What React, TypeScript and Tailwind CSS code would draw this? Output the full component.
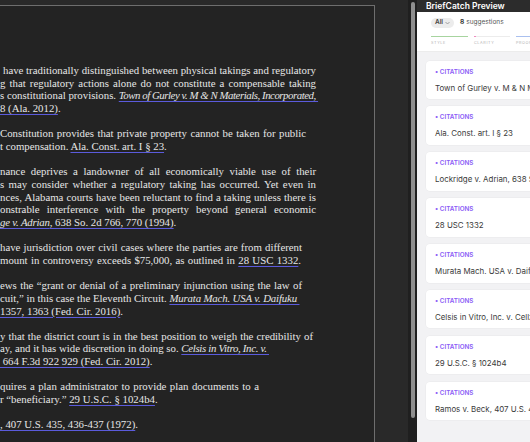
type Seg = { t: string; i?: boolean; u?: boolean; tr?: string };
type Line = { cls: string; segs: Seg[] };

const J = "text-justify [text-align-last:justify]";

const paragraphs: Line[][] = [
  [
    { cls: `ml-[3px] w-[313px] ${J}`, segs: [{ t: "have traditionally distinguished between physical takings and regulatory" }] },
    { cls: `w-[316px] ${J}`, segs: [{ t: "g that regulatory actions alone do not constitute a compensable taking" }] },
    {
      cls: "",
      segs: [
        { t: "s constitutional provisions. " },
        { t: "Town of Gurley v. M & N Materials, Incorporated,\u00a0", i: true, u: true, tr: "tracking-[-0.45px]" },
      ],
    },
    { cls: "", segs: [{ t: "8 (Ala. 2012)", u: true }, { t: "." }] },
  ],
  [
    { cls: `w-[306px] ${J}`, segs: [{ t: "Constitution provides that private property cannot be taken for public" }] },
    { cls: "", segs: [{ t: "t compensation. " }, { t: "Ala. Const. art. I § 23", u: true }, { t: "." }] },
  ],
  [
    { cls: `w-[316px] ${J}`, segs: [{ t: "nance deprives a landowner of all economically viable use of their" }] },
    { cls: `w-[316px] ${J}`, segs: [{ t: "s may consider whether a regulatory taking has occurred. Yet even in" }] },
    { cls: `w-[316px] ${J}`, segs: [{ t: "nces, Alabama courts have been reluctant to find a taking unless there is" }] },
    { cls: `w-[316px] ${J}`, segs: [{ t: "onstrable interference with the property beyond general economic" }] },
    {
      cls: "",
      segs: [
        { t: "ge v. Adrian", i: true, u: true, tr: "tracking-[-0.2px]" },
        { t: ", 638 So. 2d 766, 770 (1994)", u: true },
        { t: "." },
      ],
    },
  ],
  [
    { cls: `w-[302px] ${J}`, segs: [{ t: "have jurisdiction over civil cases where the parties are from different" }] },
    {
      cls: `w-[301px] ${J}`,
      segs: [{ t: "mount in controversy exceeds $75,000, as outlined in " }, { t: "28 USC 1332", u: true }, { t: "." }],
    },
  ],
  [
    { cls: `w-[302px] ${J}`, segs: [{ t: "ews the \u201cgrant or denial of a preliminary injunction using the law of" }] },
    {
      cls: "",
      segs: [
        { t: "cuit,\u201d in this case the Eleventh Circuit. " },
        { t: "Murata Mach. USA v. Daifuku\u00a0", i: true, u: true, tr: "tracking-[-0.15px]" },
      ],
    },
    { cls: "", segs: [{ t: "1357, 1363 (Fed. Cir. 2016)", u: true }, { t: "." }] },
  ],
  [
    { cls: `w-[313px] ${J}`, segs: [{ t: "y that the district court is in the best position to weigh the credibility of" }] },
    {
      cls: "",
      segs: [
        { t: "ay, and it has wide discretion in doing so. " },
        { t: "Celsis in Vitro, Inc. v.\u00a0", i: true, u: true, tr: "tracking-[-0.3px]" },
      ],
    },
    { cls: "", segs: [{ t: "\u00a0664 F.3d 922 929 (Fed. Cir. 2012)", u: true }, { t: "." }] },
  ],
  [
    { cls: `w-[259px] ${J}`, segs: [{ t: "quires a plan administrator to provide plan documents to a" }] },
    {
      cls: "",
      segs: [{ t: "r \u201cbeneficiary.\u201d " }, { t: "29 U.S.C. § 1024b4", u: true }, { t: "." }],
    },
  ],
  [{ cls: "", segs: [{ t: ", 407 U.S. 435, 436-437 (1972)", u: true }, { t: "." }] }],
];

const cards = [
  "Town of Gurley v. M & N Materials, Incorporated",
  "Ala. Const. art. I § 23",
  "Lockridge v. Adrian, 638 So. 2d 766, 770 (1994)",
  "28 USC 1332",
  "Murata Mach. USA v. Daifuku Co., 830 F.3d 1357",
  "Celsis in Vitro, Inc. v. CellzDirect, Inc., 664 F.3d 922",
  "29 U.S.C. § 1024b4",
  "Ramos v. Beck, 407 U.S. 435, 436-437 (1972)",
];

function DocLine({ line }: { line: Line }) {
  return (
    <div className={`whitespace-pre-wrap ${line.cls}`}>
      {line.segs.map((s, k) => (
        <span
          key={k}
          className={`${s.i ? "italic" : ""} ${s.tr ?? ""} ${
            s.u ? "underline decoration-[#5b5bdc] decoration-1 underline-offset-[2px]" : ""
          }`}
        >
          {s.t}
        </span>
      ))}
    </div>
  );
}

export default function App() {
  return (
    <div className="flex h-[442px] w-[530px] overflow-hidden bg-[#292929]">
      {/* document */}
      <div className="h-full w-[408px] flex-none pt-[5px]">
        <div className="h-full w-[375px] overflow-hidden border-t border-r border-[#6e6e6e] bg-[#232323] pt-[58px] font-['Liberation_Serif',serif] text-[10.8px] leading-[12.7px] text-[#e6e6e6]">
          {paragraphs.map((p, i) => (
            <div key={i} className="mb-[12.5px]">
              {p.map((l, j) => (
                <DocLine key={j} line={l} />
              ))}
            </div>
          ))}
        </div>
      </div>

      {/* scrollbar */}
      <div className="h-full w-[9px] flex-none bg-[#1f1f1f] pt-[2px]">
        <div className="ml-[3px] h-[416px] w-[4px] rounded-full bg-[#8e8e8e]" />
      </div>

      {/* side panel */}
      <div className="flex h-full w-[113px] flex-none flex-col overflow-hidden font-['Inter',sans-serif]">
        <div className="flex h-[12px] w-[200px] items-center bg-[#2c2c2c] pl-[9px] text-[8.5px] font-semibold text-white">
          BriefCatch Preview
        </div>
        <div className="h-[40px] w-[200px] border-b border-[#ececec] bg-white pl-[14px] pt-[6px]">
          <div className="flex items-center">
            <div className="flex h-[10px] w-[23px] items-center justify-center gap-[2px] rounded-full bg-[#ececec] text-[6.5px] font-semibold text-[#444]">
              All
              <svg width="5" height="4" viewBox="0 0 10 6" fill="none" stroke="#888" strokeWidth="1.5">
                <path d="M1 1l4 4 4-4" />
              </svg>
            </div>
            <span className="ml-[6px] text-[6.5px] font-bold text-[#333]">8</span>
            <span className="ml-[2px] text-[6.5px] text-[#555]">suggestions</span>
          </div>
          <div className="mt-[8px] flex gap-[6px]">
            <div className="w-[37px]">
              <div className="h-[1px] bg-[#a7d49f]" />
              <div className="mt-[3px] text-[3.8px] tracking-[0.6px] text-[#b5b5b5]">STYLE</div>
            </div>
            <div className="w-[36px]">
              <div className="flex h-[1px] bg-[#ececec]">
                <div className="w-[2px] bg-[#f08cc0]" />
              </div>
              <div className="mt-[3px] text-[3.8px] tracking-[0.6px] text-[#b5b5b5]">CLARITY</div>
            </div>
            <div className="w-[36px]">
              <div className="h-[1px] bg-[#aac0ef]" />
              <div className="mt-[3px] text-[3.8px] tracking-[0.6px] text-[#b5b5b5]">PROOFING</div>
            </div>
          </div>
        </div>
        <div className="flex flex-1 flex-col gap-[7.4px] bg-[#f2f2f4] pl-[9px] pt-[8.5px]">
          {cards.map((c, i) => (
            <div
              key={i}
              className="h-[38.5px] w-[200px] flex-none rounded-[4px] bg-white pl-[9px] pt-[8px] shadow-[0_0_0_0.5px_rgba(0,0,0,0.04)]"
            >
              <div className="text-[6.3px] font-semibold leading-[7px] text-[#8b5cf6]">• CITATIONS</div>
              <div className="mt-[8px] whitespace-nowrap text-[7.9px] leading-[9px] text-[#3b3b3b]">{c}</div>
            </div>
          ))}
        </div>
      </div>
    </div>
  );
}
